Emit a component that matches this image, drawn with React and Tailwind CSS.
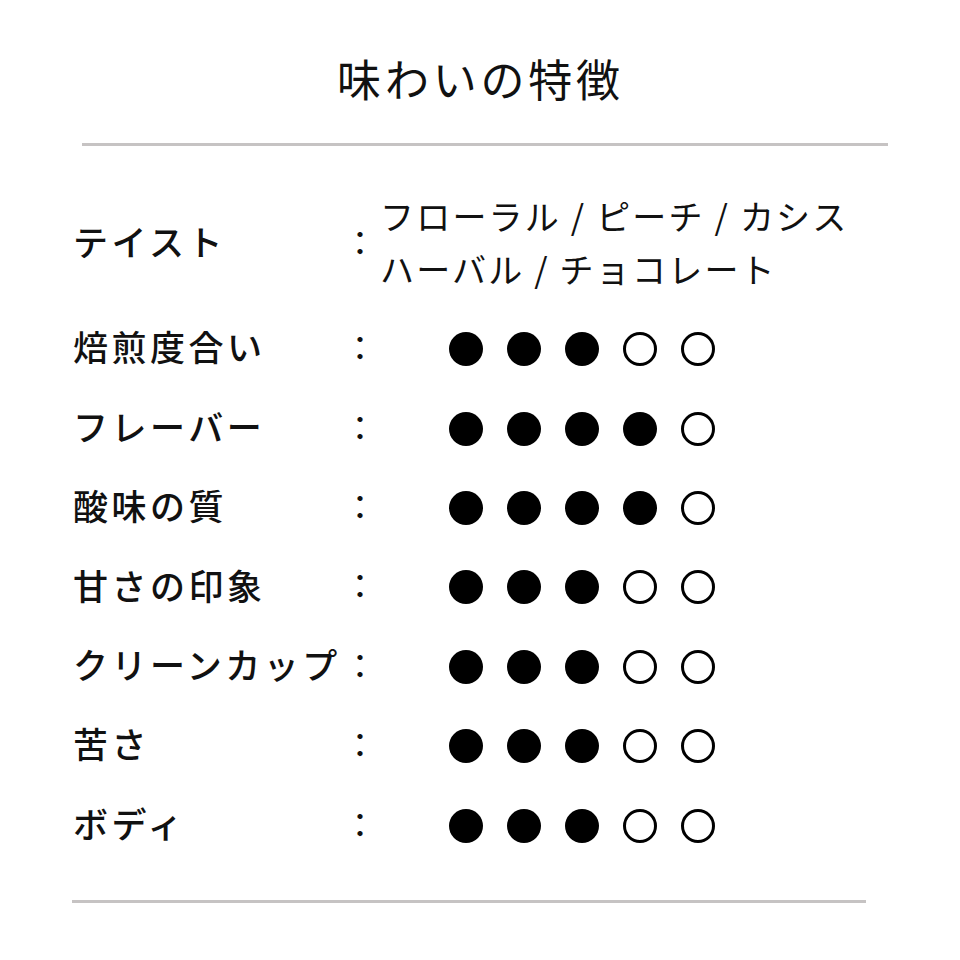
import React from "react";

const rows = [
  ["焙煎度合い", 3],
  ["フレーバー", 4],
  ["酸味の質", 4],
  ["甘さの印象", 3],
  ["クリーンカップ", 3],
  ["苦さ", 3],
  ["ボディ", 3],
];

function Dots({ n }) {
  return (
    <div className="flex gap-[24px] ml-[66px] mt-[5px]">
      {[0, 1, 2, 3, 4].map((i) =>
        i < n ? (
          <div key={i} className="w-[34px] h-[34px] rounded-full bg-black" />
        ) : (
          <div key={i} className="w-[34px] h-[34px] rounded-full border-[3.5px] border-black bg-white" />
        )
      )}
    </div>
  );
}

export default function App() {
  return (
    <div
      className="w-[960px] h-[960px] bg-white text-[#111] overflow-hidden"
      style={{ fontFamily: '"Noto Sans CJK JP", "Noto Sans", sans-serif' }}
    >
      <div className="pt-[56px] text-center text-[44px] leading-[44px] tracking-[3.8px] pl-[1px]">
        味わいの特徴
      </div>
      <div className="mt-[43px] ml-[82px] w-[806px] h-[3px] bg-[#c6c3c3]" />

      <div className="ml-[73px] mt-[42px]">
        <div className="flex items-center h-[107px]">
          <div className="w-[270px] shrink-0 text-[35px] font-medium tracking-[3.5px] whitespace-nowrap">
            テイスト
          </div>
          <div className="w-[34px] shrink-0 text-[34px] text-center">：</div>
          <div className="ml-[3px] text-[34px] leading-[53px] tracking-[2.2px] whitespace-nowrap">
            <div>フローラル / ピーチ / カシス</div>
            <div>ハーバル / チョコレート</div>
          </div>
        </div>
        <div className="mt-[12px]">
          {rows.map(([label, n]) => (
            <div key={label} className="flex items-center h-[79.4px]">
              <div className="w-[270px] shrink-0 text-[35px] font-medium tracking-[3.5px] whitespace-nowrap">
                {label}
              </div>
              <div className="w-[34px] shrink-0 text-[34px] text-center">：</div>
              <div className="ml-[6px]">
                <Dots n={n} />
              </div>
            </div>
          ))}
        </div>
      </div>

      <div className="mt-[37px] ml-[72px] w-[794px] h-[3px] bg-[#c6c3c3]" />
    </div>
  );
}
